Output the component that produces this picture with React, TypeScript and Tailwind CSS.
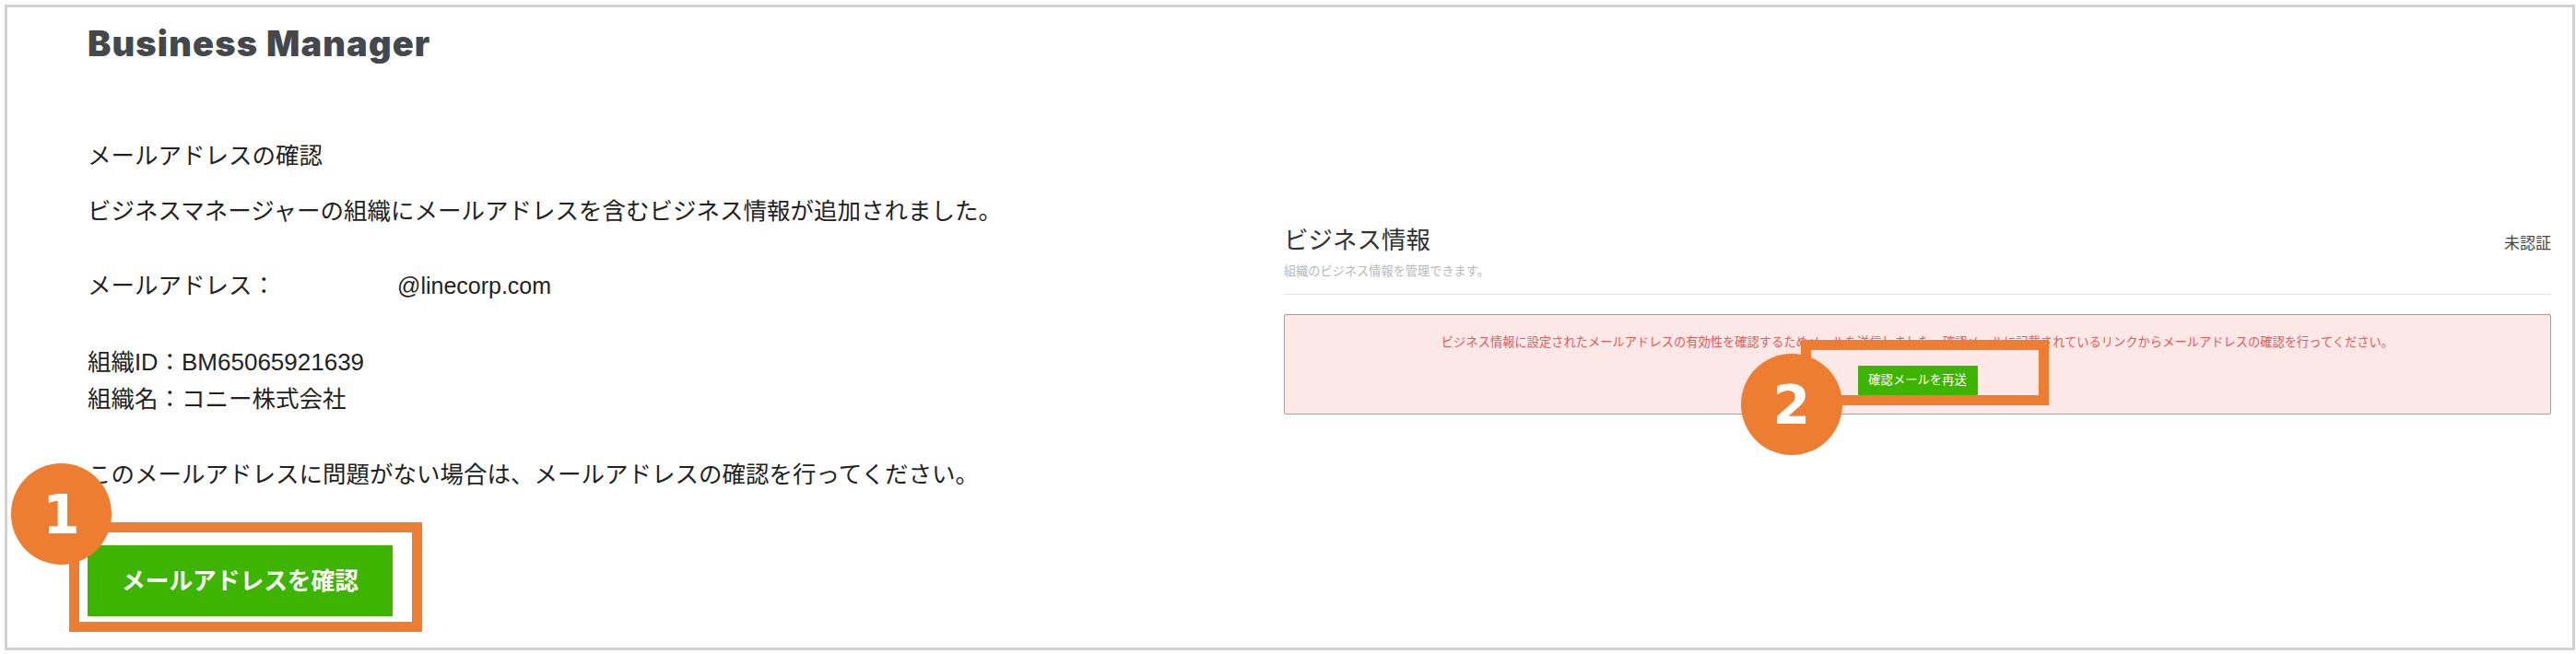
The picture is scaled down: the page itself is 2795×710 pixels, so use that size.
const sans = 'font-["Liberation_Sans","Noto_Sans_CJK_JP",sans-serif]';

function EmailConfirmPanel() {
  return (
    <div className="flex-1 pl-[87px] pt-[17px] text-[25.5px] leading-[40px] text-[#222222]">
      <div className='font-["Inter",sans-serif] text-[38px] leading-[44px] font-black tracking-[1.15px] text-[#44484c]'>Business Manager</div>
      <p className="mt-[80px]">メールアドレスの確認</p>
      <p className="mt-[20px]">ビジネスマネージャーの組織にメールアドレスを含むビジネス情報が追加されました。</p>
      <p className="mt-[41px] flex">
        <span className="w-[336px]">メールアドレス：</span>
        <span className="text-[25px]">@linecorp.com</span>
      </p>
      <p className="mt-[43px]">組織ID：<span className="text-[26px]">BM65065921639</span></p>
      <p>組織名：コニー株式会社</p>
      <p className="mt-[42px]">このメールアドレスに問題がない場合は、メールアドレスの確認を行ってください。</p>
      <button className="mt-[57px] flex h-[77px] w-[331px] items-center justify-center bg-[#3db500] text-[25.7px] font-bold text-white">
        メールアドレスを確認
      </button>
    </div>
  );
}

function BusinessInfoPanel() {
  return (
    <div className="mr-[23px] w-[1375px] pt-[235px]">
      <div className="border-b border-[#e6e6e6] pb-[14px]">
        <div className="flex items-start justify-between">
          <h2 className="text-[26.5px] leading-[36px] font-normal text-[#333333]">ビジネス情報</h2>
          <span className="mt-[10px] text-[17px] leading-[24px] text-[#444444]">未認証</span>
        </div>
        <p className="mt-[6px] text-[13.2px] leading-[20px] text-[#b8b8b8]">組織のビジネス情報を管理できます。</p>
      </div>
      <div className="mt-[21px] flex h-[109px] flex-col items-center rounded-[2px] border border-[#e08585] bg-[#fde8e8] pt-[20px]">
        <p className="text-[13.28px] leading-[20px] text-[#e25b5b]">
          ビジネス情報に設定されたメールアドレスの有効性を確認するためメールを送信しました。確認メールに記載されているリンクからメールアドレスの確認を行ってください。
        </p>
        <button className="mt-[15px] flex h-[32px] w-[130px] items-center justify-center rounded-[1px] bg-[#3db500] text-[13.3px] text-white">
          確認メールを再送
        </button>
      </div>
    </div>
  );
}

export default function App() {
  return (
    <div className={`relative h-[710px] w-[2795px] overflow-hidden bg-white pt-[5px] pl-[5px] ${sans}`}>
      <div className="flex h-[701px] w-[2789px] border-[3px] border-[#d2d2d2]">
        <EmailConfirmPanel />
        <BusinessInfoPanel />
      </div>

      {/* callouts */}
      <div className="absolute top-[567px] left-[75px] h-[119px] w-[383px] border-[11px] border-[#ed7d31]" />
      <div className='absolute top-[503px] left-[12px] flex h-[110px] w-[109px] items-center justify-center rounded-full bg-[#ed7d31] pt-[2px] font-["DejaVu_Sans",sans-serif] text-[58px] font-bold text-white'>
        1
      </div>
      <div className="absolute top-[369px] left-[1954px] h-[71px] w-[269px] border-[11px] border-[#ed7d31]" />
      <div className='absolute top-[384px] left-[1889px] flex h-[110px] w-[110px] items-center justify-center rounded-full bg-[#ed7d31] pt-[2px] font-["DejaVu_Sans",sans-serif] text-[58px] font-bold text-white'>
        2
      </div>
    </div>
  );
}
